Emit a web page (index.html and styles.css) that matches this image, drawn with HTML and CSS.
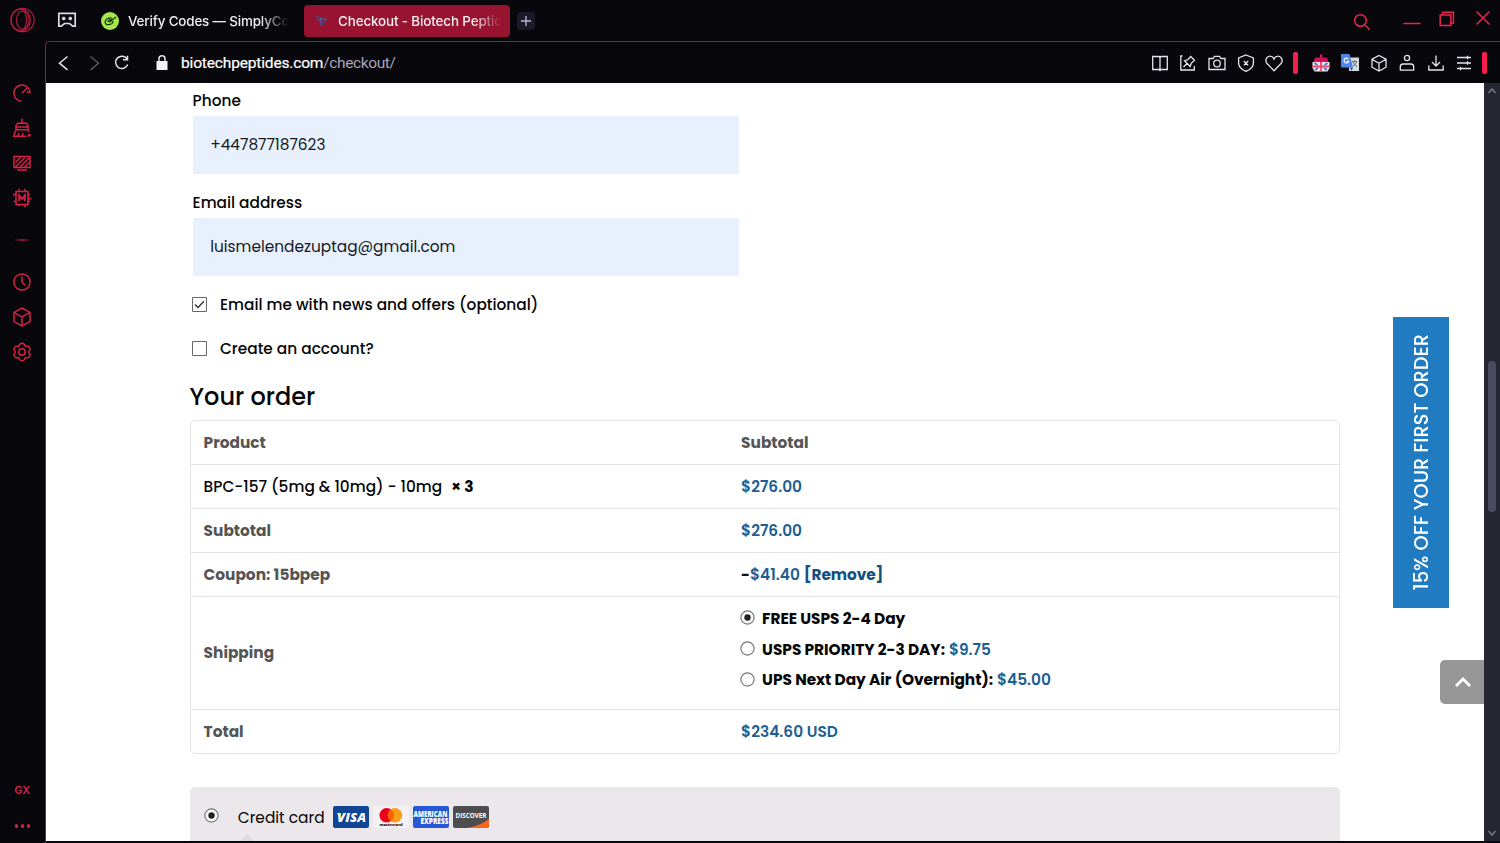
FILE: index.html
```html
<!DOCTYPE html>
<html lang="en">
<head>
<meta charset="utf-8">
<title>Checkout - Biotech Peptides</title>
<link rel="stylesheet" href="styles.css">
</head>
<body>
<div class="browser">
  <aside class="rail">
    <svg class="opera" width="28" height="28" viewBox="0 0 28 28"><circle cx="14.500" cy="14" r="11.700"/><ellipse cx="12.700" cy="14" rx="9.600" ry="10.800"/><ellipse cx="14.800" cy="14" rx="6.300" ry="9.200"/><path d="M16.500 5.800q4 8.200 0 16.400"/></svg>
    <nav class="rail-group tools">
      <svg class="ico" viewBox="0 0 20 20"><path d="M9.5 18.2A8.1 8.1 0 1 1 18 9.3h-3.2M9.8 10.2l5.3-5"/></svg>
      <svg class="ico" viewBox="0 0 20 20"><path d="M10 .5v4.8M4 11.8V7.2l1.8-1.9h8.4L16 7.2v4.6M4 9h12M4 11.8h12M4 11.8l-2.4 6.400h13M16 11.800l.5 2.500M6 17.500l1-2.500M10.400 17.500l.6-2.500"/><circle cx="17.300" cy="17.300" r=".8"/></svg>
      <svg class="ico" viewBox="0 0 20 20"><path d="M2 3.500h16v11H2zM5 17h10M3.500 9.500l5-5M3.500 14l9-9M8 14l9-9M12.500 14l4.500-4.500"/></svg>
      <svg class="ico" viewBox="0 0 20 20"><path d="M4 3.500h12v13H4zM7 .8v2.700M13 .8v2.700M7 16.500v1.700M13 16.500v2.700M1 6.500h3M16 6.500h2M1.500 13.500H4M16 10.500h3M16 13.500h2"/><path class="heavy" d="M7.200 13V7.500L10 11l2.800-3.500V13"/></svg>
    </nav>
    <span class="rail-sep"></span>
    <nav class="rail-group links">
      <svg class="ico" viewBox="0 0 20 20"><circle cx="10" cy="10" r="8.100"/><path d="M10 4.500V10l3 3.200"/></svg>
      <svg class="ico" viewBox="0 0 20 20"><path d="M10 1l8 4.400v9.200L10 19l-8-4.400V5.400zM2 5.400l8 4.400 8-4.400M10 9.800V19"/></svg>
      <svg class="ico" viewBox="0 0 20 20"><path stroke-linejoin="round" d="M8 2Q10 .6 12 2L13.300 4.200 15.800 4.200Q18.200 5.400 18 7.700L16.700 10 18 12.300Q18.200 14.600 15.800 15.800L13.300 15.800 12 18Q10 19.400 8 18L6.700 15.800 4.200 15.800Q1.800 14.600 2 12.300L3.300 10 2 7.700Q1.800 5.400 4.200 4.200L6.700 4.200z"/><circle cx="10" cy="10" r="3.200"/></svg>
    </nav>
    <span class="gx">GX</span>
    <span class="dots"><i></i><i></i><i></i></span>
  </aside>
  <header class="tabs">
    <svg class="pad" width="20" height="16" viewBox="0 0 20 16"><path d="M1.800 1.300h16.400v12.900h-2.400l-3.300-2.700h-5l-3.300 2.700H1.800z"/><path class="eyes" d="M6.700 4.700v3.600M4.900 6.500h3.600M13.300 4.700v3.600M11.500 6.500h3.600"/></svg>
    <div class="tab idle">
      <svg width="18" height="18" viewBox="0 0 18 18"><circle cx="9" cy="9" r="9" fill="#a5e84c"/><path d="M10.500 5.800Q5.500 5.600 4.200 9.200q-.4 3.800 3.500 3.500 4-.400 4.500-3.700M6.500 10q1.500-2.700 4-2.700-2 1.500-1.800 2.600 1.500-.5 2.700-2.200l3.700-2.700" fill="none" stroke="#1a3610" stroke-width="1.300"/></svg>
      <span class="tab-title">Verify Codes — SimplyCo</span>
    </div>
    <div class="tab active">
      <svg width="16" height="16" viewBox="0 0 16 16"><path d="M2 3l5 2 6 1-3 4-3 3-1-5zM2 3l4 5 7-2M3 7l7 3M7 5l0 8" fill="none" stroke="#584a86" stroke-width=".8"/><circle cx="7" cy="6" r="1.200" fill="#2474b8"/><circle cx="12" cy="7" r=".9" fill="#40508d"/><circle cx="8" cy="11" r=".9" fill="#40508d"/></svg>
      <span class="tab-title">Checkout - Biotech Peptic</span>
    </div>
    <svg class="plus" width="18" height="18" viewBox="0 0 18 18"><path d="M9 4v10M4 9h10"/></svg>
    <div class="window">
      <svg width="18" height="18" viewBox="0 0 18 18"><circle cx="7.500" cy="7.500" r="5.800"/><path d="M11.700 11.700l5 5"/></svg>
      <svg class="min" width="18" height="18" viewBox="0 0 18 18"><path d="M.5 11.500h17"/></svg>
      <svg class="max" width="16" height="16" viewBox="0 0 16 16"><path d="M1.200 4h10.600v10.600H1.200zM3.600 4V1.300h10.800v10.800h-2.600"/></svg>
      <svg class="close" width="16" height="16" viewBox="0 0 16 16"><path d="M1.500 1.500l13 13M14.500 1.500l-13 13"/></svg>
    </div>
  </header>
  <section class="frame">
    <div class="bar">
      <svg class="nav back" viewBox="0 0 20 20"><path d="M13.500 3.500l-8 6.700 8 6.600"/></svg>
      <svg class="nav fwd" viewBox="0 0 20 20"><path d="M6.500 3.500l8 6.700-8 6.600"/></svg>
      <svg class="nav reload" viewBox="0 0 20 20"><path d="M15.200 6.200A6.200 6.200 0 1 0 15.700 11.500M15.500 2.800v4H11"/></svg>
      <svg class="nav lock" viewBox="0 0 20 20"><path fill="#f2f1f5" stroke="none" d="M4.500 8h11v9h-11z"/><path d="M7 8.500V5.800a3 3 0 0 1 6 0v2.700"/></svg>
      <span class="url"><span class="host">biotechpeptides.com</span><span class="path">/checkout/</span></span>
      <div class="actions">
        <svg class="ico" viewBox="0 0 20 20"><path d="M2.700 3.500h6.300l1 1 1-1h6.300v13H11l-1 1-1-1H2.700zM10 4v13"/></svg>
        <svg class="ico" viewBox="0 0 20 20"><path d="M4.500 3H2.800v14h13.500v-4M5.500 14l3.800-3.800M6.500 7.800l5.700 5.700 1-3.200 3.300-3-3.800-3.800-3 3.300z"/></svg>
        <svg class="ico" viewBox="0 0 20 20"><path d="M2 5.500h4l1.500-2.200h5L14 5.500h4v11H2z"/><circle cx="10" cy="10.500" r="3.300"/></svg>
        <svg class="ico" viewBox="0 0 20 20"><path d="M10 2l7.400 3v5q0 5.500-7.400 8.300Q2.600 15.500 2.600 10V5zM7.800 8l4.400 4.400M12.200 8l-4.400 4.400"/></svg>
        <svg class="ico" viewBox="0 0 20 20"><path d="M10 17.700L3 10.500C.3 7.200 3 2.700 6.500 3.200Q9 3.500 10 6q1-2.500 3.500-2.800C17 2.700 19.700 7.200 17 10.500z"/></svg>
        <span class="mark"></span>
        <svg class="ico ext" viewBox="0 0 20 20"><path d="M3 9Q2.500 4.500 6 4.500h3V1.500h2.500v3H14q3.500 0 3 4.500z" fill="#cf1158" stroke="none"/><path d="M1.500 9h17v6l-2 3.500h-13l-2-3.500z" fill="#eee6f4" stroke="none"/><path d="M3.500 10l3 2M16.500 10l-3 2M4 17l3-2M16 17l-3-2" stroke="#5272c4" stroke-width="1.800"/><path d="M10 9v9.500M1.500 13.500h17" stroke="#f04468" stroke-width="1.800"/></svg>
        <svg class="ico" viewBox="0 0 20 20"><path d="M9 4.500h10V18H9z" fill="#d5d9dc" stroke="none"/><path d="M1 1h8.500L13 14.500H2q-1 0-1-1z" fill="#4d88e8" stroke="none"/><path d="M10 14.500h3L11.500 18z" fill="#2457ba" stroke="none"/><path d="M12 8.500h5M14.500 7v1.500M16.500 9q-1 3-3.500 4M13 9q1 3 4 4.500" stroke="#637883" stroke-width="1"/><path d="M8.300 6.100a2.400 2.400 0 1 0 .4 2.200H6.500" stroke="#fff" stroke-width="1.200"/></svg>
        <svg class="ico" viewBox="0 0 20 20"><path d="M10 2.500l7 3.700v8L10 18l-7-3.800v-8zM3 6.200l7 4 7-4M10 10.200V18"/></svg>
        <svg class="ico" viewBox="0 0 20 20"><circle cx="10" cy="5" r="2.600"/><path d="M3.300 17.200v-3.500q0-2.700 3-2.700h7.400q3 0 3 2.700v3.500z"/></svg>
        <svg class="ico" viewBox="0 0 20 20"><path d="M10 2.500v10M6 9l4 4 4-4M2.800 12.500V17h14.400v-4.500"/></svg>
        <svg class="ico" viewBox="0 0 20 20"><path d="M3 4.500h14M3 10h14M3 15.500h14M13.500 2.800v3.400M13.500 8.300v3.400M6.500 13.800v3.400"/></svg>
        <span class="mark"></span>
      </div>
    </div>
    <div class="view">
      <main class="page">
        <form class="billing">
          <label class="field">Phone<span class="input">+447877187623</span></label>
          <label class="field">Email address<span class="input">luismelendezuptag@gmail.com</span></label>
          <div class="check"><svg class="box" viewBox="0 0 15 15"><path d="M.5.500h14v14H.500z"/><path class="tick" d="M3 7.500l3 3 6-6.200"/></svg><span>Email me with news and offers (optional)</span></div>
          <div class="check"><svg class="box" viewBox="0 0 15 15"><path d="M.5.500h14v14H.500z"/></svg><span>Create an account?</span></div>
        </form>
        <h2>Your order</h2>
        <div class="order">
          <div class="row"><b>Product</b><b>Subtotal</b></div>
          <div class="row"><div class="item"><span>BPC-157 (5mg &amp; 10mg) - 10mg</span><strong>× 3</strong></div><div class="price">$276.00</div></div>
          <div class="row"><b>Subtotal</b><div class="price">$276.00</div></div>
          <div class="row"><b>Coupon: 15bpep</b><div class="price pair"><span><em>-</em>$41.40</span><a>[Remove]</a></div></div>
          <div class="row tall"><b>Shipping</b>
            <ul>
              <li><svg class="radio" viewBox="0 0 15 15"><circle cx="7.500" cy="7.500" r="6.600"/><circle class="on" cx="7.500" cy="7.500" r="3.200"/></svg><span>FREE USPS 2-4 Day</span></li>
              <li><svg class="radio" viewBox="0 0 15 15"><circle cx="7.500" cy="7.500" r="6.600"/></svg><span>USPS PRIORITY 2-3 DAY:</span><span class="price">$9.75</span></li>
              <li><svg class="radio" viewBox="0 0 15 15"><circle cx="7.500" cy="7.500" r="6.600"/></svg><span>UPS Next Day Air (Overnight):</span><span class="price">$45.00</span></li>
            </ul>
          </div>
          <div class="row"><b>Total</b><div class="price">$234.60 USD</div></div>
        </div>
        <section class="payment">
          <svg class="radio" viewBox="0 0 15 15"><circle cx="7.500" cy="7.500" r="6.600" fill="#fff"/><circle class="on" cx="7.500" cy="7.500" r="3.200"/></svg>
          <span class="method">Credit card</span>
          <div class="cards">
            <svg viewBox="0 0 36 22"><rect width="36" height="22" rx="2" fill="#0e4595"/><path d="M3.500 7h4l1 5z" fill="#f2ae14"/><text x="18.500" y="15.800" class="visa" textLength="29">VISA</text></svg>
            <svg viewBox="0 0 36 22"><rect width="36" height="22" rx="2" fill="#f3f1f3"/><circle cx="13.700" cy="9.300" r="7.200" fill="#eb001b"/><circle cx="22" cy="9.300" r="7.200" fill="#f79e1b"/><path d="M17.900 3.400a7.200 7.200 0 0 1 0 11.800 7.200 7.200 0 0 1 0-11.800" fill="#ff5f00"/><text x="18" y="20.300" class="mc" textLength="23">mastercard</text></svg>
            <svg viewBox="0 0 36 22"><rect width="36" height="22" rx="2" fill="#2557d6"/><text x="17.500" y="10.500" class="amex" textLength="34" lengthAdjust="spacingAndGlyphs">AMERICAN</text><text x="21.500" y="18.300" class="amex" textLength="28" lengthAdjust="spacingAndGlyphs">EXPRESS</text></svg>
            <svg viewBox="0 0 36 22"><rect width="36" height="22" rx="2" fill="#4d4d4d"/><path d="M36 13v7q0 2-2 2H13q14-2 23-9z" fill="#fd6020"/><text x="18" y="12" class="disc" textLength="31" lengthAdjust="spacingAndGlyphs">DISCOVER</text></svg>
          </div>
          <span class="notch"></span>
        </section>
      </main>
      <div class="offer"><span>15% OFF YOUR FIRST ORDER</span></div>
      <div class="top"><svg width="18" height="11" viewBox="0 0 18 11"><path d="M2 9l7-7 7 7"/></svg></div>
      <div class="scroll">
        <svg width="10" height="8" viewBox="0 0 10 8"><path d="M1.500 6L5 2l3.500 4"/></svg>
        <span class="thumb"></span>
        <svg class="down" width="10" height="8" viewBox="0 0 10 8"><path d="M1.500 2L5 6l3.500-4"/></svg>
      </div>
    </div>
  </section>
</div>
</body>
</html>
```
FILE: styles.css
```css
* { box-sizing: border-box; }
body { margin: 0; overflow: hidden; background: #08070c; font-family: Poppins, Inter, sans-serif; font-size: 15.360px; color: #050505; }
svg { display: block; flex: none; fill: none; }
.browser { width: 1500px; height: 843px; display: grid; grid-template-columns: 45px 1455px; grid-template-rows: 41px 802px; }
.rail { grid-row: 1 / 3; display: flex; flex-direction: column; align-items: center; padding: 6px .5px 0 0; stroke: #d62047; stroke-width: 1.500; }
.opera { stroke: #b01c3e; stroke-width: 1.200; }
.ico { width: 20px; height: 20px; }
.heavy { stroke-width: 1.900; }
.rail-group { display: flex; flex-direction: column; gap: 15px; }
.tools { margin-top: 49px; }
.rail-sep { width: 18px; height: 2px; margin: 31px 0; background: linear-gradient(90deg, transparent, #8a1834, transparent); }
.gx { margin-top: 421px; font: 600 11px/14px Inter, sans-serif; color: #da2148; }
.dots { display: flex; gap: 2.500px; margin-top: 27px; }
.dots i { width: 3.500px; height: 3.500px; border-radius: 50%; background: #da2148; }
.tabs { display: flex; align-items: center; padding-left: 12px; font: 500 13.400px/20px Inter, sans-serif; color: #f0eff4; }
.pad { margin-top: -1px; stroke: #dddce2; stroke-width: 1.700; }
.eyes { stroke-width: 2; }
.tab { display: flex; align-items: center; height: 32px; white-space: nowrap; }
.idle { width: 190px; margin-left: 24px; gap: 9px; }
.active { width: 206px; margin-left: 13px; padding: 0 8px 0 10px; gap: 8px; border-radius: 4px; background: #98132f; }
.tab-title { -webkit-mask-image: linear-gradient(90deg, #000 82%, transparent); mask-image: linear-gradient(90deg, #000 82%, transparent); }
.idle .tab-title { letter-spacing: -.15px; }
.active .tab-title { letter-spacing: -.12px; }
.plus { margin-left: 7px; border-radius: 4px; background: #1c1a2a; stroke: #bcb9cf; stroke-width: 1.300; }
.window { margin-left: auto; display: flex; align-items: center; padding-right: 9px; stroke: #e82650; stroke-width: 1.500; }
.window svg:first-child { margin: 3px -1px 0 0; }
.min { margin: 1px 0 0 33px; }
.max { margin: -4px 0 0 18px; }
.close { margin: -6px 0 0 20px; }
.frame { border: solid #981b38; border-width: 1px 0 0 1px; border-radius: 5px 0 0 0; display: flex; flex-direction: column; overflow: hidden; }
.bar { height: 41px; flex: none; display: flex; align-items: center; padding: 1px 13px 0 8px; stroke: #e5e4ea; stroke-width: 1.500; }
.nav { width: 20px; height: 20px; }
.fwd { margin-left: 10px; stroke: #56545e; }
.reload { margin-left: 8px; }
.lock { margin-left: 20px; }
.url { margin-left: 9px; font: 400 15.500px/22px Roboto, sans-serif; color: #fff; }
.host { letter-spacing: -.16px; -webkit-text-stroke: .2px #fff; }
.path { color: #aaa6bc; letter-spacing: -.38px; }
.actions { margin-left: auto; display: flex; align-items: center; gap: 8.600px; stroke-width: 1.300; }
.mark { width: 5px; height: 22px; border-radius: 2px; background: #fa1e4e; }
.ext { margin-left: 5px; }
.actions .mark:last-child { margin-left: -1px; }
.view { position: relative; height: 758px; display: flex; justify-content: space-between; background: #fff; overflow: hidden; }
.page { width: 1150px; margin-left: 143.600px; }
.billing { padding: 7px 0 0 3px; font-weight: 500; }
.field { display: block; width: 546px; height: 102px; line-height: 22px; }
.input { display: flex; align-items: center; height: 58px; margin-top: 4px; padding: 0 17.600px 1px; border-radius: 2px; background: #e8f0fe; font-weight: 400; color: #16191d; }
.check { display: flex; align-items: center; height: 44px; gap: 13px; }
.field + .check { margin-top: -12px; }
.box { width: 15px; height: 15px; margin-left: -.6px; stroke: #686868; stroke-width: 1; }
.tick { stroke: #333; stroke-width: 1.400; }
h2 { margin: 12px 0 8px; font-size: 24px; line-height: 30px; font-weight: 500; }
.order { border: 1px solid #e5e5e7; border-radius: 5px; height: 334px; }
.row { display: grid; grid-template-columns: 537.500px 1fr; align-items: center; height: 44px; padding: 0 0 0 13px; border-bottom: 1px solid #e5e5e7; line-height: 23px; }
.row:last-child { border: 0; padding-bottom: 2px; }
.row b { font-weight: 700; color: #555; }
.item { display: flex; gap: 9px; font-weight: 500; }
.price { font-weight: 600; color: #1d5f92; }
.pair { display: flex; gap: 4px; }
.pair em { font-style: normal; font-weight: 700; color: #111; }
.pair a { color: #14507f; font-weight: 700; letter-spacing: -.1px; }
.row.tall { height: 113px; padding-bottom: 1px; }
.tall ul { list-style: none; margin: 0; padding: 0 0 7px; }
.tall li { display: flex; align-items: center; height: 30.700px; gap: 4px; font-weight: 700; white-space: nowrap; letter-spacing: -.02px; }
.radio { width: 15px; height: 15px; stroke: #777; stroke-width: 1.200; }
.on { fill: #222; stroke: none; }
.tall .radio { margin: -1px 3px 0 -1px; }
.payment { position: relative; display: flex; align-items: center; height: 54px; margin-top: 33px; padding: 6px 14.400px 0; border-radius: 5px 5px 0 0; background: #ebe7ea; }
.payment .radio { margin-top: -3px; }
.method { margin-left: 18.800px; }
.cards { display: flex; gap: 4px; margin-left: 8px; }
.cards svg { width: 36px; height: 22px; }
.cards text { text-anchor: middle; font-family: "Open Sans", sans-serif; fill: #fff; font-weight: 800; }
.cards .visa { font-size: 13px; font-style: italic; }
.cards .mc { font-size: 4px; fill: #222; }
.cards .amex { font-size: 8.500px; }
.cards .disc { font-size: 7px; font-weight: 700; }
.notch { position: absolute; left: 50px; top: 50px; width: 14px; height: 14px; transform: rotate(45deg); background: #dedadd; }
.offer { position: absolute; left: 1347px; top: 234px; width: 56px; height: 291px; display: flex; align-items: center; justify-content: center; background: #217bc1; color: #fff; font-size: 19.400px; font-weight: 500; white-space: nowrap; }
.offer span { writing-mode: vertical-rl; transform: rotate(180deg); }
.top { position: absolute; left: 1394px; top: 577px; width: 44px; height: 44px; display: flex; align-items: center; justify-content: center; padding-left: 2px; border-radius: 5px 0 0 5px; background: #979797; stroke: #fff; stroke-width: 2.800; }
.scroll { width: 16px; display: flex; flex-direction: column; align-items: center; padding: 4px 0; background: #262633; stroke: #77767f; stroke-width: 1.500; }
.thumb { width: 8px; height: 151px; margin-top: 266px; border-radius: 4px; background: #494b65; }
.down { margin-top: auto; }
```
